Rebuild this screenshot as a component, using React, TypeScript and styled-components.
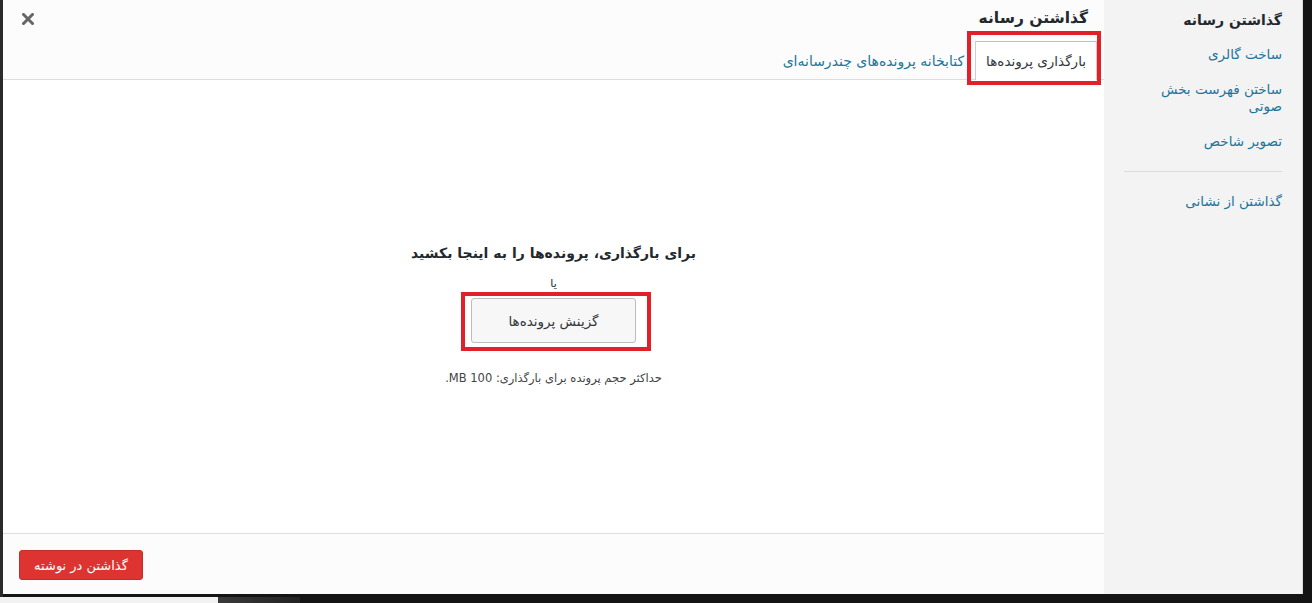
import React from "react";
import styled, { createGlobalStyle } from "styled-components";

const Global = createGlobalStyle`
  html, body { margin: 0; padding: 0; }
  body {
    background: #141414;
    font-family: "DejaVu Sans", "Noto Sans", sans-serif;
    overflow: hidden;
  }
  * { box-sizing: border-box; }
`;

const Page = styled.div`
  width: 1312px;
  height: 603px;
  background: linear-gradient(to right, #2b2b2b 0, #2b2b2b 3px, #141414 3px);
  display: flex;
  flex-direction: column;
  overflow: hidden;
`;

const Modal = styled.div`
  margin-left: 3px;
  width: 1300px;
  height: 594px;
  display: flex;
  flex-direction: row;
  background: #fff;
`;

const Sidebar = styled.nav`
  width: 199px;
  flex: none;
  background: #f3f3f3;
  border-right: 1px solid #dcdcdc;
  padding-top: 8px;
  display: flex;
  flex-direction: column;
`;

const SideTitle = styled.div`
  padding: 0 20px;
  line-height: 24px;
  font-size: 14px;
  font-weight: bold;
  color: #23282d;
  margin-bottom: 5px;
`;

const SideLink = styled.a`
  display: block;
  padding: 9px 20px;
  line-height: 17px;
  font-size: 13.5px;
  color: #21759b;
  text-decoration: none;
`;

const SideSep = styled.div`
  height: 1px;
  background: #dcdcdc;
  margin: 12px 20px;
`;

const Frame = styled.div`
  flex: 1;
  display: flex;
  flex-direction: column;
  min-width: 0;
`;

const Header = styled.div`
  background: #fcfcfc;
  border-bottom: 1px solid #dddddd;
  height: 80px;
  display: flex;
  flex-direction: column;
`;

const TitleRow = styled.div`
  height: 42px;
  display: flex;
  justify-content: space-between;
  align-items: flex-start;
  padding: 0 16px 0 19px;
`;

const Title = styled.h1`
  margin: 0;
  font-size: 15.5px;
  font-weight: bold;
  line-height: 36px;
  color: #23282d;
`;

const CloseButton = styled.button`
  border: none;
  background: none;
  padding: 0;
  margin-top: 13px;
  width: 12px;
  height: 12px;
  display: flex;
  cursor: pointer;
`;

const Tabs = styled.div`
  height: 38px;
  display: flex;
  align-items: stretch;
  padding-right: 7px;
`;

const Tab = styled.a<{ $active?: boolean }>`
  position: relative;
  display: flex;
  align-items: center;
  justify-content: center;
  white-space: nowrap;
  padding: 0 10px 1px;
  font-size: ${(p) => (p.$active ? "13.5px" : "14px")};
  text-decoration: none;
  color: ${(p) => (p.$active ? "#32373c" : "#21759b")};
  background: ${(p) => (p.$active ? "#fff" : "transparent")};
  border: 1px solid ${(p) => (p.$active ? "#cccccc" : "transparent")};
  border-top-color: ${(p) => (p.$active ? "#b5c5d6" : "transparent")};
  border-bottom: none;
  margin-bottom: -1px;
`;

const Mark = styled.span<{ $t: number; $r: number; $b: number; $l: number }>`
  position: absolute;
  top: ${(p) => -p.$t}px;
  right: ${(p) => -p.$r}px;
  bottom: ${(p) => -p.$b}px;
  left: ${(p) => -p.$l}px;
  border: 4px solid #e2202a;
  pointer-events: none;
`;

const Content = styled.div`
  flex: 1;
  background: #fff;
  display: flex;
  flex-direction: column;
  align-items: center;
  padding-top: 161px;
`;

const DropTitle = styled.h2`
  margin: 0;
  font-size: 14px;
  font-weight: bold;
  line-height: 24px;
  color: #23282d;
`;

const Or = styled.p`
  margin: 12px 0 0;
  font-size: 11px;
  line-height: 14px;
  color: #23282d;
`;

const SelectWrap = styled.div`
  position: relative;
  margin-top: 7px;
`;

const SelectButton = styled.button`
  width: 165px;
  height: 45px;
  background: #f7f7f7;
  border: 1px solid #bdbdbd;
  border-radius: 3px;
  font-family: inherit;
  font-size: 13.5px;
  color: #32373c;
  cursor: pointer;
`;

const MaxSize = styled.p`
  margin: 27px 0 0;
  font-size: 11.5px;
  line-height: 16px;
  color: #444;
`;

const Toolbar = styled.div`
  height: 61px;
  background: #fcfcfc;
  border-top: 1px solid #dddddd;
  display: flex;
  justify-content: flex-end;
  align-items: flex-start;
  padding: 16px 16px 0;
`;

const InsertButton = styled.button`
  width: 124px;
  height: 30px;
  background: #dd3431;
  border: 1px solid #c52d2a;
  border-radius: 3px;
  color: #fff;
  font-family: inherit;
  font-size: 13px;
  cursor: pointer;
`;

const Under = styled.div`
  margin-top: 3px;
  height: 6px;
  width: 300px;
  background: linear-gradient(to right, #f2f2f2 0, #f2f2f2 218px, #3a3a3a 218px, #222 300px);
`;

export default function App() {
  return (
    <>
      <Global />
      <Page>
        <Modal dir="rtl">
          <Sidebar>
            <SideTitle>گذاشتن رسانه</SideTitle>
            <SideLink href="#">ساخت گالری</SideLink>
            <SideLink href="#">ساختن فهرست بخش صوتی</SideLink>
            <SideLink href="#">تصویر شاخص</SideLink>
            <SideSep />
            <SideLink href="#">گذاشتن از نشانی</SideLink>
          </Sidebar>
          <Frame>
            <Header>
              <TitleRow>
                <Title>گذاشتن رسانه</Title>
                <CloseButton aria-label="بستن">
                  <svg width="12" height="12" viewBox="0 0 12 12">
                    <path d="M1.5 1.5 L10.5 10.5 M10.5 1.5 L1.5 10.5" stroke="#666" strokeWidth="3" strokeLinecap="square" />
                  </svg>
                </CloseButton>
              </TitleRow>
              <Tabs>
                <Tab href="#" $active>
                  بارگذاری پرونده‌ها
                  <Mark $t={11} $r={5} $b={5} $l={9} />
                </Tab>
                <Tab href="#">کتابخانه پرونده‌های چندرسانه‌ای</Tab>
              </Tabs>
            </Header>
            <Content>
              <DropTitle>برای بارگذاری، پرونده‌ها را به اینجا بکشید</DropTitle>
              <Or>یا</Or>
              <SelectWrap>
                <SelectButton>گزینش پرونده‌ها</SelectButton>
                <Mark $t={6} $r={15} $b={8} $l={10} />
              </SelectWrap>
              <MaxSize>حداکثر حجم پرونده برای بارگذاری: 100 MB.</MaxSize>
            </Content>
            <Toolbar>
              <InsertButton>گذاشتن در نوشته</InsertButton>
            </Toolbar>
          </Frame>
        </Modal>
        <Under />
      </Page>
    </>
  );
}
